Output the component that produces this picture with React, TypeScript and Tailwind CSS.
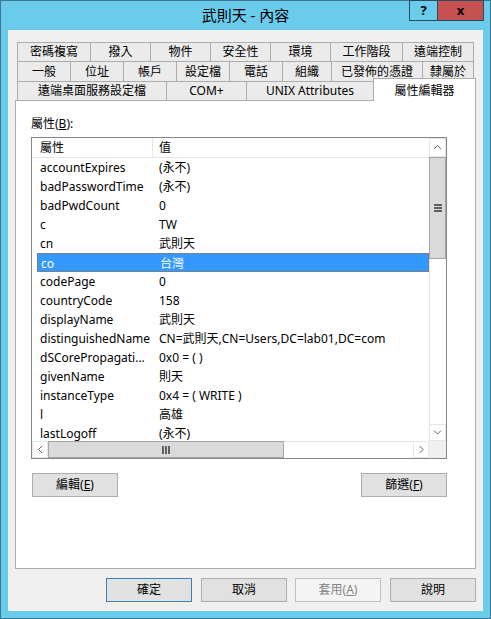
import React from 'react';

const rows: [string, string][] = [
  ['accountExpires', '(永不)'],
  ['badPasswordTime', '(永不)'],
  ['badPwdCount', '0'],
  ['c', 'TW'],
  ['cn', '武則天'],
  ['co', '台灣'],
  ['codePage', '0'],
  ['countryCode', '158'],
  ['displayName', '武則天'],
  ['distinguishedName', 'CN=武則天,CN=Users,DC=lab01,DC=com'],
  ['dSCorePropagati...', '0x0 = ( )'],
  ['givenName', '則天'],
  ['instanceType', '0x4 = ( WRITE )'],
  ['l', '高雄'],
  ['lastLogoff', '(永不)'],
];

const tabRow1 = [
  { label: '密碼複寫', w: 'w-[73px]' },
  { label: '撥入', w: 'w-[60px]' },
  { label: '物件', w: 'w-[60px]' },
  { label: '安全性', w: 'w-[60px]' },
  { label: '環境', w: 'w-[60px]' },
  { label: '工作階段', w: 'w-[72px]' },
  { label: '遠端控制', w: 'w-[72px] border-r' },
];

const tabRow2 = [
  { label: '一般', w: 'w-[53px]' },
  { label: '位址', w: 'w-[53px]' },
  { label: '帳戶', w: 'w-[53px]' },
  { label: '設定檔', w: 'w-[53px]' },
  { label: '電話', w: 'w-[53px]' },
  { label: '組織', w: 'w-[49px]' },
  { label: '已發佈的憑證', w: 'w-[91px]' },
  { label: '隸屬於', w: 'w-[52px] border-r' },
];

const tabRow3 = [
  { label: '遠端桌面服務設定檔', w: 'w-[149px]' },
  { label: 'COM+', w: 'w-[80px]' },
  { label: 'UNIX Attributes', w: 'w-[127px]' },
];

function Tab({ label, w }: { label: string; w: string }) {
  return (
    <div className={`flex h-full items-center justify-center border-l border-t border-[#acacac] bg-[#ebebeb] ${w}`}>
      {label}
    </div>
  );
}

function Chevron({ dir }: { dir: 'up' | 'down' | 'left' | 'right' }) {
  const pts = {
    up: '1,5 4.5,1.5 8,5',
    down: '1,1.5 4.5,5 8,1.5',
    left: '5,1 1.5,4.5 5,8',
    right: '1.5,1 5,4.5 1.5,8',
  }[dir];
  const vertical = dir === 'up' || dir === 'down';
  return (
    <svg width={vertical ? 9 : 7} height={vertical ? 7 : 9} viewBox={vertical ? '0 0 9 7' : '0 0 7 9'}>
      <polyline points={pts} fill="none" stroke="#606060" strokeWidth="1" />
    </svg>
  );
}

function Button({ children, variant }: { children: React.ReactNode; variant?: 'default' | 'disabled' }) {
  const cls =
    variant === 'default'
      ? 'border-[#3c7fb1] bg-[#e1e1e1] text-black'
      : variant === 'disabled'
        ? 'border-[#bfbfbf] bg-[#f4f4f4] text-[#838383]'
        : 'border-[#adadad] bg-[#e1e1e1] text-black';
  return (
    <div className={`flex h-[24px] w-[86px] items-center justify-center border ${cls}`}>{children}</div>
  );
}

export default function App() {
  return (
    <div className="h-[619px] w-[491px] border border-[#3b7896] bg-[#6bcbea] font-['Noto_Sans','Noto_Sans_CJK_TC',sans-serif] text-[12px] text-black">
      {/* title bar */}
      <div className="grid h-[29px] grid-cols-[1fr_auto_1fr]">
        <div />
        <div className="pt-[4px] text-[15px] leading-[20px]">武則天 - 內容</div>
        <div className="-mt-px flex justify-end pr-[6px]">
          <div className="flex h-[21px] w-[29px] items-center justify-center border border-[#2c4c5c] text-[13px] font-bold leading-none">
            ?
          </div>
          <div className="-ml-px flex h-[21px] w-[47px] items-center justify-center border border-[#2c4c5c] bg-[#c75050] text-[13px] font-bold leading-none">
            x
          </div>
        </div>
      </div>

      {/* client area */}
      <div className="mx-[7px] h-[581px] bg-[#f0f0f0] px-[7px] pt-[12px]">
        <div className="ml-[2px]">
          <div className="flex h-[19px]">
            {tabRow1.map((t) => (
              <Tab key={t.label} {...t} />
            ))}
          </div>
          <div className="flex h-[20px]">
            {tabRow2.map((t) => (
              <Tab key={t.label} {...t} />
            ))}
          </div>
          <div className="flex h-[19px] items-start">
            {tabRow3.map((t) => (
              <Tab key={t.label} {...t} />
            ))}
            <div className="relative z-10 -mt-[3px] flex h-[23px] w-[103px] items-start justify-center border-x border-t border-[#acacac] bg-white pt-[3px]">
              屬性編輯器
            </div>
          </div>
        </div>

        {/* tab panel */}
        <div className="h-[469px] w-[461px] border border-[#acacac] bg-white px-[15px] pt-[15px]">
          <div className="h-[21px] leading-[16px]">
            屬性(<span className="underline">B</span>):
          </div>

          {/* list view */}
          <div className="grid h-[322px] w-[416px] grid-cols-[1fr_17px] grid-rows-[1fr_17px] border border-[#828790]">
            <div className="overflow-hidden">
              <div className="grid h-[20px] grid-cols-[121px_1fr] border-b border-[#e5e5e5]">
                <div className="border-r border-[#e5e5e5] pl-[8px] leading-[19px]">屬性</div>
                <div className="pl-[6px] leading-[19px]">值</div>
              </div>
              <div className="ml-[5px]">
                {rows.map(([k, v]) => {
                  const sel = k === 'co';
                  return (
                    <div
                      key={k}
                      className={`grid h-[19px] grid-cols-[119px_1fr] whitespace-nowrap pl-[3px] leading-[19px] ${
                        sel ? 'border border-dotted border-[#b36a1e] bg-[#3399ff] pl-[2px] leading-[17px] text-white' : ''
                      }`}
                    >
                      <span>{k}</span>
                      <span>{v}</span>
                    </div>
                  );
                })}
              </div>
            </div>

            {/* vertical scrollbar */}
            <div className="flex flex-col bg-white">
              <div className="flex h-[19px] items-center justify-center border border-[#e6e6e6] bg-white">
                <Chevron dir="up" />
              </div>
              <div className="flex h-[102px] items-center justify-center border border-[#a6a6a6] bg-[#dadada]">
                <div className="flex flex-col gap-[1px]">
                  <div className="h-[2px] w-[8px] bg-[#606060]" />
                  <div className="h-[2px] w-[8px] bg-[#606060]" />
                  <div className="h-[2px] w-[8px] bg-[#606060]" />
                </div>
              </div>
              <div className="flex-1 border-l border-[#e6e6e6]" />
              <div className="flex h-[17px] items-center justify-center border border-[#e6e6e6] bg-white">
                <Chevron dir="down" />
              </div>
            </div>

            {/* horizontal scrollbar */}
            <div className="flex bg-white">
              <div className="flex w-[16px] items-center justify-center border border-[#e6e6e6]">
                <Chevron dir="left" />
              </div>
              <div className="flex w-[236px] items-center justify-center border border-[#a6a6a6] bg-[#dadada]">
                <div className="flex gap-[1px]">
                  <div className="h-[8px] w-[2px] bg-[#606060]" />
                  <div className="h-[8px] w-[2px] bg-[#606060]" />
                  <div className="h-[8px] w-[2px] bg-[#606060]" />
                </div>
              </div>
              <div className="flex-1 border-t border-[#e6e6e6]" />
              <div className="flex w-[16px] items-center justify-center border border-[#e6e6e6]">
                <Chevron dir="right" />
              </div>
            </div>
            <div className="bg-[#f0f0f0]" />
          </div>

          <div className="mt-[14px] flex w-[416px] justify-between pl-px">
            <Button>
              編輯(<span className="underline">E</span>)
            </Button>
            <Button>
              篩選(<span className="underline">F</span>)
            </Button>
          </div>
        </div>

        {/* dialog buttons */}
        <div className="mt-[9px] flex justify-end">
          <Button variant="default">確定</Button>
          <div className="w-[9px]" />
          <Button>取消</Button>
          <div className="w-[8px]" />
          <Button variant="disabled">
            套用(<span className="underline">A</span>)
          </Button>
          <div className="w-[9px]" />
          <Button>說明</Button>
        </div>
      </div>
    </div>
  );
}
